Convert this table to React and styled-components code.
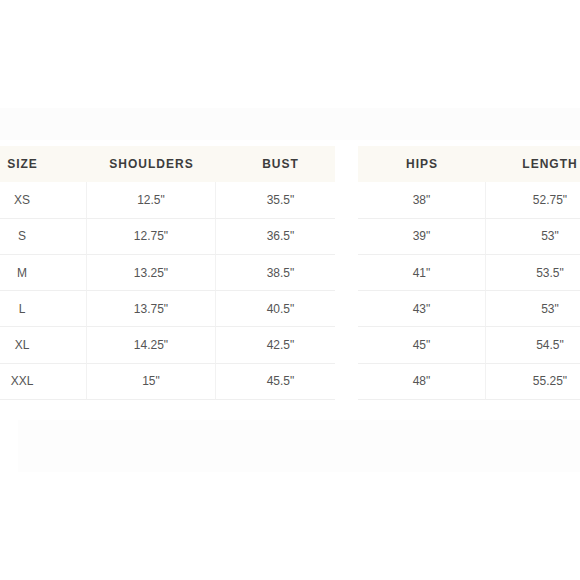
import React from 'react';
import styled, { createGlobalStyle } from 'styled-components';

const GlobalStyle = createGlobalStyle`
  body {
    margin: 0;
    background: #ffffff;
    font-family: 'Liberation Sans', Arial, sans-serif;
  }
`

const leftColumns = ['SIZE', 'SHOULDERS', 'BUST']
const leftRows = [
  ['XS', '12.5"', '35.5"'],
  ['S', '12.75"', '36.5"'],
  ['M', '13.25"', '38.5"'],
  ['L', '13.75"', '40.5"'],
  ['XL', '14.25"', '42.5"'],
  ['XXL', '15"', '45.5"'],
]

const rightColumns = ['HIPS', 'LENGTH']
const rightRows = [
  ['38"', '52.75"'],
  ['39"', '53"'],
  ['41"', '53.5"'],
  ['43"', '53"'],
  ['45"', '54.5"'],
  ['48"', '55.25"'],
]

const SizeTable = ({ columns, rows, colWidth, shift }) => (
  <TableGrid $cols={columns.length} $colWidth={colWidth} $shift={shift}>
    {columns.map((c) => (
      <HeadCell key={c}>{c}</HeadCell>
    ))}
    {rows.map((row, i) =>
      row.map((v, j) => (
        <BodyCell key={i + '-' + j} $last={j === row.length - 1}>
          {v}
        </BodyCell>
      ))
    )}
  </TableGrid>
)

const App = () => {
  return (
    <>
      <GlobalStyle />
      <Page>
        <FaintBand $height={32} />
        <TablesRow>
          <Panel $width={335}>
            <SizeTable columns={leftColumns} rows={leftRows} colWidth={129} shift={-42} />
          </Panel>
          <Panel $grow>
            <SizeTable columns={rightColumns} rows={rightRows} colWidth={128} shift={0} />
          </Panel>
        </TablesRow>
        <FaintBand $height={52} $inset />
      </Page>
    </>
  )
}

export default App

const Page = styled.div`
  width: 580px;
  height: 580px;
  padding-top: 108px;
  box-sizing: border-box;
  display: flex;
  flex-direction: column;
  overflow: hidden;
`
const FaintBand = styled.div`
  height: ${(p) => p.$height}px;
  background: ${(p) => (p.$inset ? '#fdfdfd' : '#fcfcfc')};
  margin: ${(p) => (p.$inset ? '20px 0 0 18px' : '0 0 6px 0')};
`
const TablesRow = styled.div`
  display: flex;
  flex-direction: row;
  gap: 23px;
`
const Panel = styled.div`
  width: ${(p) => (p.$width ? p.$width + 'px' : 'auto')};
  flex: ${(p) => (p.$grow ? 1 : 'none')};
  overflow: hidden;
`
const TableGrid = styled.div`
  display: grid;
  grid-template-columns: repeat(${(p) => p.$cols}, ${(p) => p.$colWidth}px);
  grid-auto-rows: 36.3px;
  margin-left: ${(p) => p.$shift}px;
`
const HeadCell = styled.div`
  background: #fbf9f3;
  display: flex;
  align-items: center;
  justify-content: center;
  font-size: 12px;
  font-weight: 700;
  letter-spacing: 1px;
  color: #3d3d3d;
`
const BodyCell = styled.div`
  display: flex;
  align-items: center;
  justify-content: center;
  box-sizing: border-box;
  border-bottom: 1px solid #efefef;
  border-right: ${(p) => (p.$last ? 'none' : '1px solid #f2f2f2')};
  font-size: 12px;
  color: #555555;
`
